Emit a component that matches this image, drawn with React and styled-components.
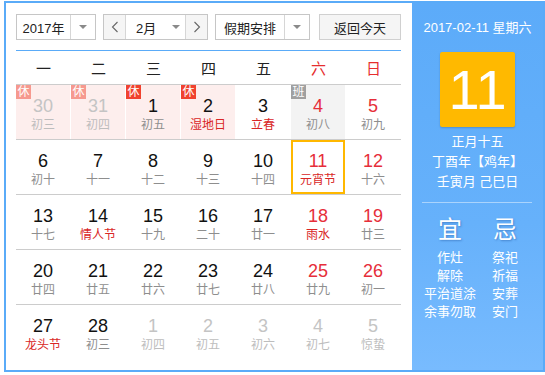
import React from 'react'
import styled, { createGlobalStyle, css } from 'styled-components'

const GlobalStyle = createGlobalStyle`
  body {
    margin: 0;
    background: #fff;
    font-family: "Liberation Sans", "Noto Sans CJK SC", sans-serif;
  }
`

const Page = styled.div`
  padding: 1px 0 0 4px;
`

const Calendar = styled.div`
  box-sizing: border-box;
  width: 541px;
  height: 371px;
  border: 2px solid #5aabf8;
  display: flex;
  background: #fff;
`

const Main = styled.div`
  width: 406px;
  padding: 11px 11px 0 10px;
  box-sizing: border-box;
`

const Toolbar = styled.div`
  display: flex;
  align-items: center;
  height: 26px;
  padding-bottom: 10px;
  border-bottom: 1px solid #5aabf8;
`

const Select = styled.div`
  box-sizing: border-box;
  display: flex;
  height: 26px;
  width: ${({ $width }) => $width}px;
  margin-right: ${({ $gap }) => $gap || 0}px;
  border: 1px solid #c6c6c6;
  background: #fff;
  font-size: 13px;
  color: #222;
`

const SelectText = styled.div`
  flex: 1;
  display: flex;
  align-items: center;
  justify-content: center;
`

const Caret = styled.div`
  width: 24px;
  display: flex;
  align-items: center;
  justify-content: center;
  ${({ $divided }) => $divided && css`border-left: 1px solid #d6d6d6;`}

  &::after {
    content: '';
    border-left: 4px solid transparent;
    border-right: 4px solid transparent;
    border-top: 4px solid #8a8a8a;
  }
`

const MonthGroup = styled.div`
  box-sizing: border-box;
  display: flex;
  height: 26px;
  width: 105px;
  margin-right: 7px;
  border: 1px solid #c6c6c6;
  font-size: 13px;
  color: #222;
`

const Arrow = styled.div`
  width: 21px;
  background: #f5f5f5;
  display: flex;
  align-items: center;
  justify-content: center;
  ${({ $side }) => $side === 'left'
    ? css`border-right: 1px solid #d6d6d6;`
    : css`border-left: 1px solid #d6d6d6;`}
`

const MonthSelect = styled.div`
  flex: 1;
  display: flex;
  align-items: center;
  padding-left: 10px;
  background: #fff;

  &::after {
    content: '';
    margin-left: 16px;
    border-left: 4px solid transparent;
    border-right: 4px solid transparent;
    border-top: 4px solid #8a8a8a;
  }
`

const TodayButton = styled.button`
  box-sizing: border-box;
  margin-left: auto;
  width: 82px;
  height: 26px;
  border: 1px solid #d0d0d0;
  background: #f5f5f5;
  font-family: inherit;
  font-size: 13px;
  color: #222;
  padding: 0;
`

const WeekHeader = styled.div`
  display: grid;
  grid-template-columns: repeat(7, 55px);
  height: 33px;
  align-items: center;
  font-size: 15px;
`

const WeekDay = styled.div`
  text-align: center;
  color: ${({ $weekend }) => ($weekend ? '#e62e2e' : '#222')};
`

const Row = styled.div`
  display: grid;
  grid-template-columns: repeat(7, 55px);
  border-top: 1px solid #cccccc;
  height: 54px;
`

const Cell = styled.div`
  position: relative;
  width: 54px;
  height: 54px;
  box-sizing: border-box;
  padding-top: 11px;
  display: flex;
  flex-direction: column;
  align-items: center;
  background: ${({ $bg }) => $bg};
  ${({ $selected }) => $selected && css`box-shadow: inset 0 0 0 2px #ffb800;`}
`

const DayNum = styled.div`
  font-size: 18px;
  line-height: 20px;
  color: ${({ $color }) => $color};
`

const Lunar = styled.div`
  font-size: 12px;
  line-height: 18px;
  color: ${({ $color }) => $color};
`

const Badge = styled.span`
  position: absolute;
  left: 0;
  top: 0;
  width: 15px;
  height: 14px;
  font-size: 12px;
  line-height: 14px;
  text-align: center;
  color: #fff;
  background: ${({ $color }) => $color};
`

const Side = styled.div`
  flex: 1;
  background: linear-gradient(180deg, #5cabf9 0%, #66b1fb 60%, #78bbfe 100%);
  color: #fff;
  display: flex;
  flex-direction: column;
  align-items: center;
`

const DateLine = styled.div`
  margin-top: 15px;
  font-size: 13px;
  line-height: 20px;
`

const BigDay = styled.div`
  margin-top: 14px;
  width: 75px;
  height: 75px;
  border-radius: 2px;
  background: #ffb900;
  box-shadow: 0 1px 2px rgba(0, 0, 0, 0.18);
  display: flex;
  align-items: center;
  justify-content: center;
  font-size: 56px;
  line-height: 1;
`

const LunarInfo = styled.div`
  margin-top: 5px;
  font-size: 13px;
  line-height: 20px;
  text-align: center;
`

const Divider = styled.div`
  align-self: stretch;
  margin: 10px 11px 0 10px;
  height: 1px;
  background: rgba(255, 255, 255, 0.45);
`

const Almanac = styled.div`
  margin-top: 12px;
  display: grid;
  grid-template-columns: 55px 55px;
  text-align: center;
`

const AlmanacTitle = styled.div`
  font-size: 24px;
  line-height: 30px;
  text-shadow: 1px 1px 2px rgba(30, 80, 150, 0.45);
  margin-bottom: 4px;
`

const AlmanacItem = styled.div`
  font-size: 13px;
  line-height: 18px;
  white-space: nowrap;
`

const Chevron = ({ dir }) => (
  <svg width="8" height="12" viewBox="0 0 8 12">
    <polyline
      points={dir === 'left' ? '6.5,1 1.5,6 6.5,11' : '1.5,1 6.5,6 1.5,11'}
      fill="none"
      stroke="#666"
      strokeWidth="1.1"
    />
  </svg>
)

const weekDays = ['一', '二', '三', '四', '五', '六', '日']

// d: day, l: lunar/festival, o: other month, f: festival (red), b: badge
const weeks = [
  [
    { d: 30, l: '初三', o: true, b: 'rest' },
    { d: 31, l: '初四', o: true, b: 'rest' },
    { d: 1, l: '初五', b: 'rest' },
    { d: 2, l: '湿地日', f: true, b: 'rest' },
    { d: 3, l: '立春', f: true },
    { d: 4, l: '初八', b: 'work' },
    { d: 5, l: '初九' },
  ],
  [
    { d: 6, l: '初十' },
    { d: 7, l: '十一' },
    { d: 8, l: '十二' },
    { d: 9, l: '十三' },
    { d: 10, l: '十四' },
    { d: 11, l: '元宵节', f: true, sel: true },
    { d: 12, l: '十六' },
  ],
  [
    { d: 13, l: '十七' },
    { d: 14, l: '情人节', f: true },
    { d: 15, l: '十九' },
    { d: 16, l: '二十' },
    { d: 17, l: '廿一' },
    { d: 18, l: '雨水', f: true },
    { d: 19, l: '廿三' },
  ],
  [
    { d: 20, l: '廿四' },
    { d: 21, l: '廿五' },
    { d: 22, l: '廿六' },
    { d: 23, l: '廿七' },
    { d: 24, l: '廿八' },
    { d: 25, l: '廿九' },
    { d: 26, l: '初一' },
  ],
  [
    { d: 27, l: '龙头节', f: true },
    { d: 28, l: '初三' },
    { d: 1, l: '初四', o: true },
    { d: 2, l: '初五', o: true },
    { d: 3, l: '初六', o: true },
    { d: 4, l: '初七', o: true },
    { d: 5, l: '惊蛰', o: true },
  ],
]

const yi = ['作灶', '解除', '平治道涂', '余事勿取']
const ji = ['祭祀', '祈福', '安葬', '安门']

const DayCell = ({ day, col }) => {
  const weekend = col >= 5
  let numColor = weekend ? '#e62e3a' : '#111'
  let lunarColor = day.f ? '#d92626' : '#8e8e8e'
  if (day.o) {
    numColor = '#c4c4c4'
    lunarColor = '#bdbdbd'
  }
  let bg = 'transparent'
  if (day.b === 'rest') bg = '#fdeeed'
  if (day.b === 'work') bg = '#f3f3f3'
  let badgeColor = '#a0a0a0'
  if (day.b === 'rest') badgeColor = day.o ? '#f6998f' : '#f0422f'

  return (
    <Cell $bg={bg} $selected={day.sel}>
      {day.b && <Badge $color={badgeColor}>{day.b === 'rest' ? '休' : '班'}</Badge>}
      <DayNum $color={numColor}>{day.d}</DayNum>
      <Lunar $color={lunarColor}>{day.l}</Lunar>
    </Cell>
  )
}

export default function App() {
  return (
    <Page>
      <GlobalStyle />
      <Calendar>
        <Main>
          <Toolbar>
            <Select $width={80} $gap={7}>
              <SelectText>2017年</SelectText>
              <Caret $divided />
            </Select>
            <MonthGroup>
              <Arrow $side="left"><Chevron dir="left" /></Arrow>
              <MonthSelect>2月</MonthSelect>
              <Arrow $side="right"><Chevron dir="right" /></Arrow>
            </MonthGroup>
            <Select $width={95}>
              <SelectText>假期安排</SelectText>
              <Caret $divided />
            </Select>
            <TodayButton>返回今天</TodayButton>
          </Toolbar>
          <WeekHeader>
            {weekDays.map((w, i) => (
              <WeekDay key={w} $weekend={i >= 5}>{w}</WeekDay>
            ))}
          </WeekHeader>
          {weeks.map((week, r) => (
            <Row key={r}>
              {week.map((day, c) => (
                <DayCell key={c} day={day} col={c} />
              ))}
            </Row>
          ))}
        </Main>
        <Side>
          <DateLine>2017-02-11 星期六</DateLine>
          <BigDay>11</BigDay>
          <LunarInfo>
            <div>正月十五</div>
            <div>丁酉年【鸡年】</div>
            <div>壬寅月 己巳日</div>
          </LunarInfo>
          <Divider />
          <Almanac>
            <div>
              <AlmanacTitle>宜</AlmanacTitle>
              {yi.map((t) => <AlmanacItem key={t}>{t}</AlmanacItem>)}
            </div>
            <div>
              <AlmanacTitle>忌</AlmanacTitle>
              {ji.map((t) => <AlmanacItem key={t}>{t}</AlmanacItem>)}
            </div>
          </Almanac>
        </Side>
      </Calendar>
    </Page>
  )
}
